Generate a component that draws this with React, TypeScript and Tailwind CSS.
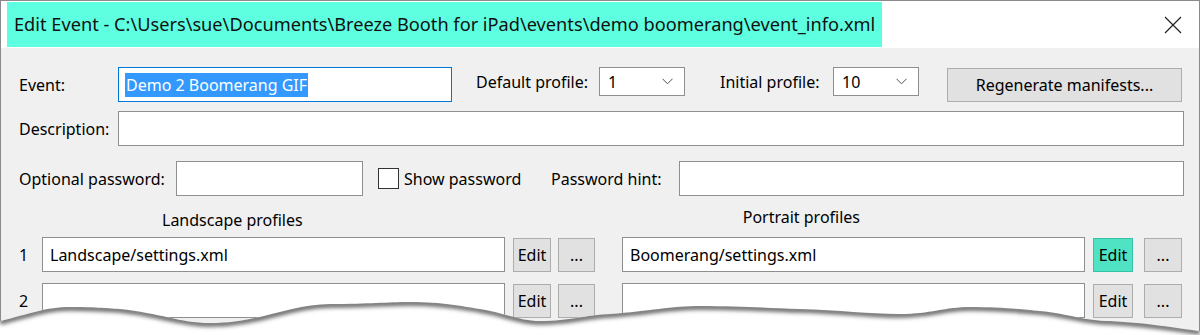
import React from 'react';

const TornEdge = () => {
  const edge =
    'M0,321 C30,314 45,307 70,307 C95,307 105,308 120,309 C160,313 180,323 210,323 C260,323 290,304 330,304 C370,304 385,302 410,302 C445,302 460,306 480,309 C505,313 520,321 540,321 C570,321 585,315 610,314 C650,311 670,306 700,306 C740,306 770,308 800,309 C840,310 870,314 900,314 C930,314 945,307 970,307 C1000,307 1020,309 1040,311 C1070,314 1085,321 1110,321 C1150,323 1175,328 1200,331';
  const fill = `${edge} L1200,335 L0,335 Z`;
  return (
    <svg className="absolute inset-0 pointer-events-none" width="1200" height="335" viewBox="0 0 1200 335">
      <defs>
        <clipPath id="below">
          <path d={fill} />
        </clipPath>
        <filter id="soft" x="-5%" y="-50%" width="110%" height="200%">
          <feGaussianBlur stdDeviation="2.2" />
        </filter>
      </defs>
      <path d={fill} fill="#ffffff" />
      <g clipPath="url(#below)">
        <path d={edge} fill="none" stroke="#5a5a5a" strokeWidth="5" filter="url(#soft)" transform="translate(0,1)" />
      </g>
    </svg>
  );
};

const TextBox = ({ value, className = '' }: { value?: string; className?: string }) => (
  <div className={`h-[35px] bg-white border border-[#8f8f8f] flex items-center px-[7px] text-black ${className}`}>
    {value}
  </div>
);

const Select = ({ value }: { value: string }) => (
  <div className="w-[86px] h-[29px] bg-white border border-[#8f8f8f] flex items-center justify-between pl-[8px] pr-[11px]">
    <span>{value}</span>
    <svg width="11" height="7" viewBox="0 0 11 7">
      <path d="M0.5 0.8 L5.5 5.8 L10.5 0.8" fill="none" stroke="#505050" strokeWidth="1" />
    </svg>
  </div>
);

const Button = ({ label, w, active = false }: { label: string; w: string; active?: boolean }) => (
  <div
    className={`${w} h-[34px] flex items-center justify-center border ${
      active ? 'bg-[#4fe3c4] border-[#36c2a6]' : 'bg-[#e1e1e1] border-[#adadad]'
    }`}
  >
    {label}
  </div>
);

const ProfileRow = ({ n, left, right, activeRight = false }: { n: string; left?: string; right?: string; activeRight?: boolean }) => (
  <div className="flex items-start">
    <div className="w-[23px] h-[35px] flex items-center">{n}</div>
    <TextBox value={left} className="w-[463px]" />
    <div className="ml-[8px] mt-[1px]">
      <Button label="Edit" w="w-[38px]" />
    </div>
    <div className="ml-[7px] mt-[1px]">
      <Button label="..." w="w-[37px]" />
    </div>
    <TextBox value={right} className="w-[463px] ml-[27px]" />
    <div className="ml-[8px] mt-[1px]">
      <Button label="Edit" w="w-[40px]" active={activeRight} />
    </div>
    <div className="ml-[11px] mt-[1px]">
      <Button label="..." w="w-[38px]" />
    </div>
  </div>
);

export default function App() {
  return (
    <div className="relative w-[1200px] h-[335px] bg-white overflow-hidden font-['Noto_Sans','Open_Sans',sans-serif] text-black whitespace-nowrap">
      <div className="h-full border-x border-t border-[#8a8a8a] flex flex-col">
        {/* title bar */}
        <div className="h-[47px] bg-white flex items-start justify-between">
          <div className="ml-[6px] mt-[1px] h-[45px] bg-[#5dffe0] flex items-center px-[7px] text-[18.2px] leading-none text-[#111]">
            Edit Event - C:\Users\sue\Documents\Breeze Booth for iPad\events\demo boomerang\event_info.xml
          </div>
          <svg className="mt-[15px] mr-[17px]" width="18" height="18" viewBox="0 0 18 18">
            <path d="M1 1 L17 17 M17 1 L1 17" stroke="#222" strokeWidth="1.2" />
          </svg>
        </div>

        {/* body */}
        <div className="flex-1 bg-[#f0f0f0] pl-[18px] pr-[15px] pt-[19px] text-[16px] leading-none">
          <div className="flex items-start">
            <div className="w-[99px] h-[35px] flex items-center">Event:</div>
            <div className="w-[334px] h-[35px] bg-white border border-[#0078d7] flex items-center px-[6px]">
              <span className="bg-[#3399ff] text-white px-[1px] py-[4px]">Demo 2 Boomerang GIF</span>
            </div>
            <div className="ml-[24px] w-[123px] h-[29px] flex items-center">Default profile:</div>
            <Select value="1" />
            <div className="ml-[35px] w-[113px] h-[29px] flex items-center">Initial profile:</div>
            <Select value="10" />
            <div className="ml-[28px] mt-[1px]">
              <Button label="Regenerate manifests..." w="w-[235px]" />
            </div>
          </div>

          <div className="flex items-start mt-[9px]">
            <div className="w-[99px] h-[35px] flex items-center">Description:</div>
            <TextBox className="flex-1" />
          </div>

          <div className="flex items-start mt-[15px]">
            <div className="w-[157px] h-[35px] flex items-center">Optional password:</div>
            <TextBox className="w-[187px]" />
            <div className="ml-[15px] w-[173px] h-[35px] flex items-center">
              <div className="w-[21px] h-[21px] bg-white border border-[#333]" />
              <span className="ml-[5px]">Show password</span>
            </div>
            <div className="w-[128px] h-[35px] flex items-center">Password hint:</div>
            <TextBox className="flex-1" />
          </div>

          <div className="flex items-start h-[41px]">
            <div className="ml-[143px] mt-[16px]">Landscape profiles</div>
            <div className="ml-[440px] mt-[13px]">Portrait profiles</div>
          </div>

          <ProfileRow n="1" left="Landscape/settings.xml" right="Boomerang/settings.xml" activeRight />
          <div className="mt-[11px]">
            <ProfileRow n="2" />
          </div>
        </div>
      </div>
      <TornEdge />
    </div>
  );
}
